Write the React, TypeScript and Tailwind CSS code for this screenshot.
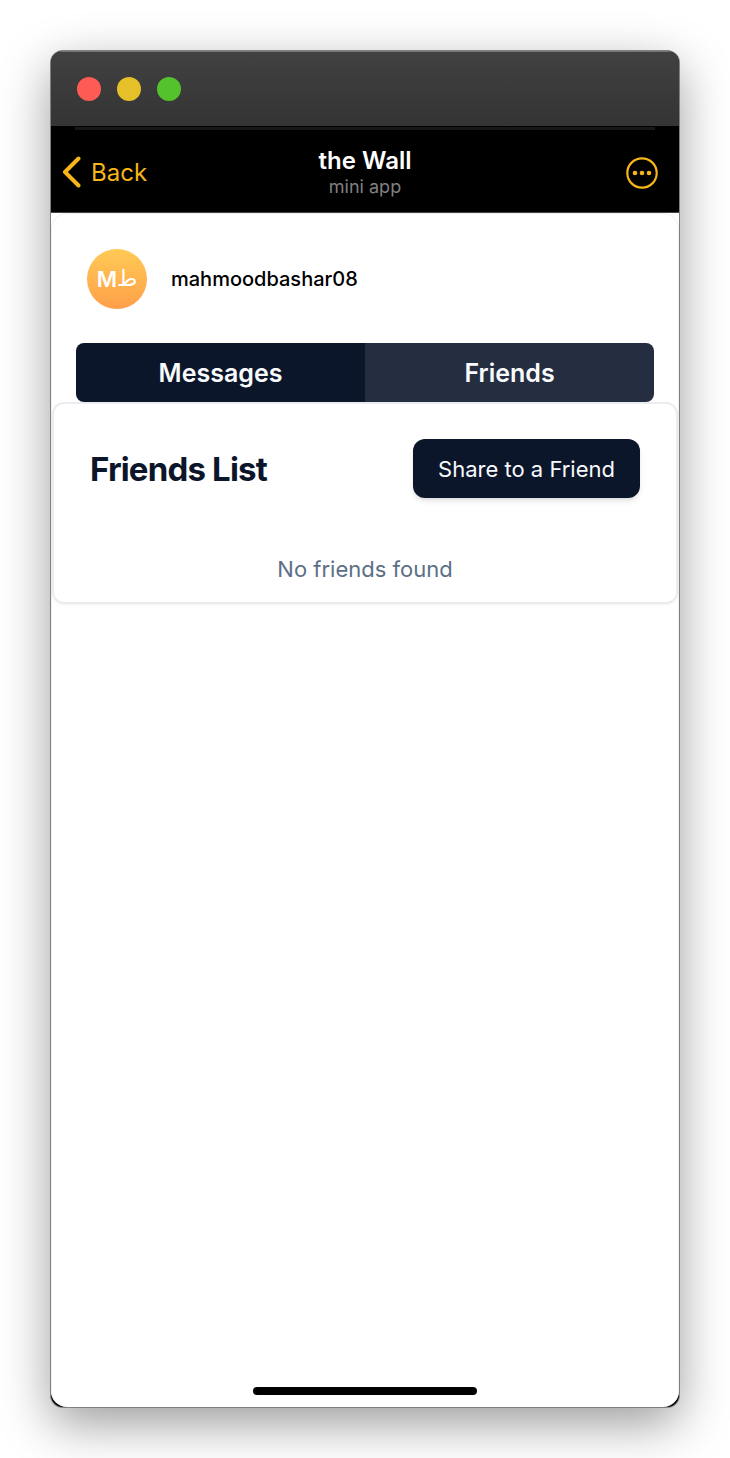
import React from "react";

function TitleBar() {
  return (
    <div className="flex h-[75px] shrink-0 items-center gap-4 border-t border-[#777777] bg-linear-to-b from-[#414141] to-[#343434] px-[26px]">
      <button aria-label="Close window" className="size-6 rounded-full bg-[#ff5b55]" />
      <button aria-label="Minimize window" className="size-6 rounded-full bg-[#e6c029]" />
      <button aria-label="Zoom window" className="size-6 rounded-full bg-[#54c22c]" />
    </div>
  );
}

function NavBar() {
  return (
    <header className="shrink-0 bg-black">
      <div className="mx-6 h-1 border-t border-black bg-[#171717]" />
      <div className="grid h-[83px] grid-cols-[1fr_auto_1fr] items-center border-b border-[#444444] px-[10px] pt-1">
        <a href="#back" className="flex items-center gap-[9px] justify-self-start text-[24px] leading-8 text-[#f5b51b]">
          <svg viewBox="0 0 21 34" className="h-[34px] w-[21px]" fill="none" aria-hidden="true">
            <path d="M17.5 2.5 4 16l13.500 13.500" stroke="currentColor" strokeWidth="4" strokeLinecap="round" strokeLinejoin="round" />
          </svg>
          Back
        </a>
        <div className="text-center">
          <h1 className="text-[24px] leading-7 font-semibold text-white">the Wall</h1>
          <p className="text-[18px] leading-6 text-[#808080]">mini app</p>
        </div>
        <button aria-label="More options" className="mr-[10px] justify-self-end text-[#f5b51b]">
          <svg viewBox="0 0 34 34" className="size-[34px]" aria-hidden="true">
            <circle cx="17" cy="17" r="14.700" fill="none" stroke="currentColor" strokeWidth="2.200" />
            <circle cx="10" cy="17" r="2.300" fill="currentColor" />
            <circle cx="17" cy="17" r="2.300" fill="currentColor" />
            <circle cx="24" cy="17" r="2.300" fill="currentColor" />
          </svg>
        </button>
      </div>
    </header>
  );
}

function Profile() {
  return (
    <div className="flex items-center gap-6 px-[35px] pt-[35px] pb-[34px]">
      <div className="flex size-[60px] items-center justify-center rounded-full bg-linear-to-b from-[#ffca55] to-[#ff9f4a] text-[22px] leading-8 font-semibold text-white">
        M<span className="font-['DejaVu_Sans',sans-serif] font-normal">ط</span>
      </div>
      <span className="text-[20px] leading-7 font-medium text-black">mahmoodbashar08</span>
    </div>
  );
}

export default function App() {
  return (
    <div className="flex min-h-screen bg-white px-[51px] py-[51px] font-['Inter','Liberation_Sans',sans-serif]">
      <div className="flex min-w-0 grow flex-col overflow-hidden rounded-xl bg-black shadow-[0_0_0_1px_#808080,0_16px_50px_rgba(0,0,0,0.400)]">
        <TitleBar />
        <NavBar />
        <main className="flex grow flex-col rounded-b-2xl bg-white">
          <div className="flex grow flex-col rounded-t-2xl rounded-b-2xl border border-b-0 border-[#f0f0f0]">
            <Profile />
            <div role="tablist" className="mx-6 grid h-[59px] grid-cols-2 overflow-hidden rounded-lg text-[25px] leading-8 font-semibold text-[#f8fafc]">
              <button role="tab" aria-selected="false" className="bg-[#0c162b]">Messages</button>
              <button role="tab" aria-selected="true" className="bg-[#252d40]">Friends</button>
            </div>
            <section className="rounded-xl border-2 border-[#ebecef] px-9 pt-[35px] pb-[17px] shadow-xs">
              <div className="flex items-center justify-between">
                <h2 className="text-[33px] leading-10 font-bold tracking-tight text-[#0c162b]">Friends List</h2>
                <button className="h-[59px] rounded-xl bg-[#0c162b] px-[25px] text-[22px] leading-8 text-[#f8fafc] shadow-md">Share to a Friend</button>
              </div>
              <p className="mt-[55px] text-center text-[22px] leading-8 text-[#5d6f87]">No friends found</p>
            </section>
            <div className="mx-auto mt-auto mb-3 h-2 w-56 rounded-full bg-black" />
          </div>
        </main>
      </div>
    </div>
  );
}
